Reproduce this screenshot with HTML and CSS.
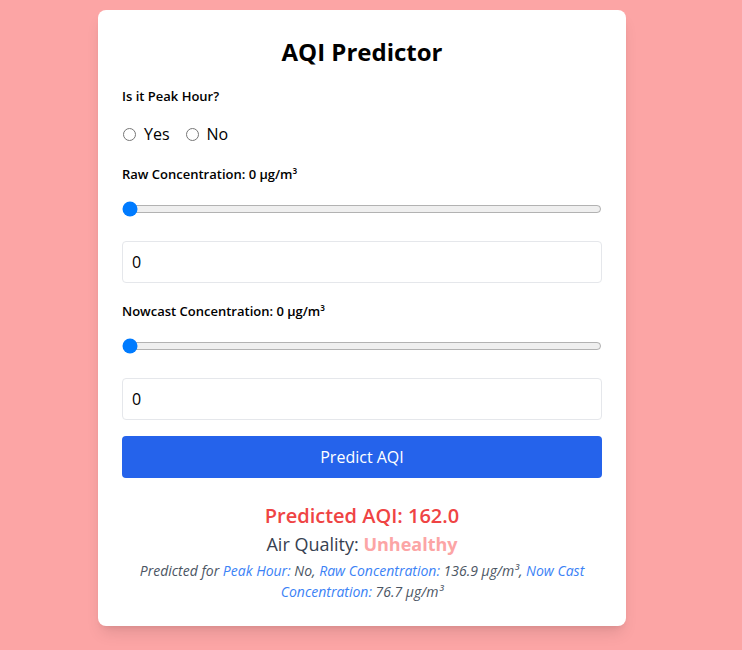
FILE: index.html
```html
<!DOCTYPE html>
<html lang="en">
<head>
<meta charset="utf-8">
<title>AQI Predictor</title>
<link rel="stylesheet" href="styles.css">
</head>
<body>
<div class="page">
  <div class="card">
    <h1 class="title">AQI Predictor</h1>
    <div class="label">Is it Peak Hour?</div>
    <div class="radios">
      <label class="radio"><input type="radio" name="peak"> <span>Yes</span></label>
      <label class="radio"><input type="radio" name="peak"> <span>No</span></label>
    </div>
    <div class="label label-conc">Raw Concentration: 0 µg/m³</div>
    <input class="range" type="range" min="0" max="500" value="0">
    <input class="num" type="text" value="0">
    <div class="label label-conc">Nowcast Concentration: 0 µg/m³</div>
    <input class="range" type="range" min="0" max="500" value="0">
    <input class="num num-last" type="text" value="0">
    <button class="btn">Predict AQI</button>
    <div class="result">
      <div class="aqi">Predicted AQI: 162.0</div>
      <div class="quality">Air Quality: <span class="status">Unhealthy</span></div>
      <div class="detail">Predicted for <span class="key">Peak Hour:</span> No, <span class="key">Raw Concentration:</span> 136.9 µg/m³, <span class="key">Now Cast Concentration:</span> 76.7 µg/m³</div>
    </div>
  </div>
</div>
</body>
</html>
```
FILE: styles.css
```css
html, body {
  margin: 0;
  padding: 0;
  background: #fca5a5;
  font-family: "Open Sans", "Noto Sans", sans-serif;
}
.page {
  display: flex;
  justify-content: center;
  padding: 10px 18px 40px 0;
}
.card {
  width: 528px;
  box-sizing: border-box;
  background: #ffffff;
  border-radius: 8px;
  padding: 24px;
  box-shadow: 0 10px 15px -3px rgba(0,0,0,0.1), 0 4px 6px -4px rgba(0,0,0,0.1);
  display: flex;
  flex-direction: column;
}
.title {
  margin: 2px 0 18px;
  font-size: 24px;
  line-height: 32px;
  font-weight: 700;
  text-align: center;
  color: #000;
}
.label {
  font-size: 13px;
  line-height: 20px;
  font-weight: 600;
  color: #000;
}
.radios {
  display: flex;
  gap: 15px;
  margin: 16px 0 18px;
  font-size: 16px;
  line-height: 24px;
}
.radio {
  display: flex;
  align-items: center;
}
.radio input {
  margin: 0 8px 0 1px;
  width: 13px;
  height: 13px;
}
.range {
  width: 100%;
  margin: 17px 0 24px;
  accent-color: #007bff;
}
.num {
  box-sizing: border-box;
  width: 100%;
  height: 42px;
  margin: 0 0 18px;
  border: 1px solid #e5e7eb;
  border-radius: 4px;
  padding: 0 9px;
  font-family: inherit;
  font-size: 16px;
  color: #000;
  outline: none;
}
.num-last {
  margin-bottom: 16px;
}
.btn {
  height: 42px;
  border: none;
  border-radius: 4px;
  background: #2563eb;
  color: #fff;
  font-family: inherit;
  font-size: 16px;
}
.result {
  margin-top: 24px;
  text-align: center;
}
.aqi {
  font-size: 20px;
  line-height: 28px;
  font-weight: 600;
  color: #ef4444;
}
.quality {
  font-size: 18px;
  line-height: 28px;
  color: #374151;
}
.status {
  font-weight: 700;
  color: #fca5a5;
}
.detail {
  margin-top: 2px;
  font-size: 14px;
  line-height: 21px;
  font-style: italic;
  color: #4b5563;
}
.key {
  color: #3b82f6;
}
```
